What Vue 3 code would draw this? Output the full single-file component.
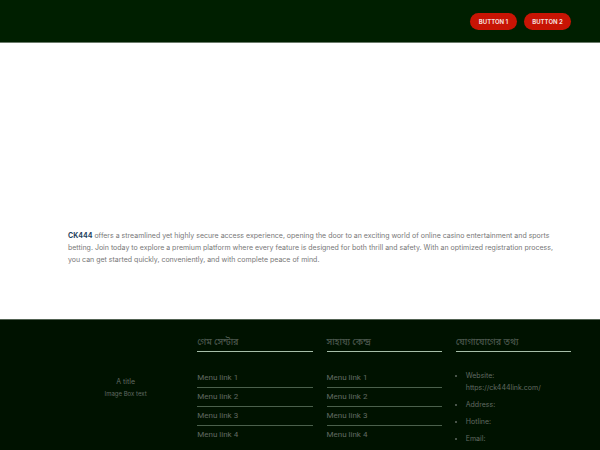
<template>
  <div class="page">
    <header class="header">
      <button v-for="label in buttons" :key="label" class="button" type="button">{{ label }}</button>
    </header>

    <main class="content">
      <p>
        <a class="brand" href="#">CK444</a> offers a streamlined yet highly secure access experience, opening the door to an exciting world of online casino entertainment and sports betting. Join today to explore a premium platform where every feature is designed for both thrill and safety. With an optimized registration process, you can get started quickly, conveniently, and with complete peace of mind.
      </p>
    </main>

    <footer class="footer">
      <div class="image-box">
        <p>A title</p>
        <p class="image-text">Image Box text</p>
      </div>

      <nav v-for="menu in menus" :key="menu.title" class="column">
        <h2>{{ menu.title }}</h2>
        <ul class="menu">
          <li v-for="n in 4" :key="n"><a href="#">Menu link {{ n }}</a></li>
        </ul>
      </nav>

      <section class="column">
        <h2>যোগাযোগের তথ্য</h2>
        <ul class="contact">
          <li>Website: <a href="#">https://ck444link.com/</a></li>
          <li v-for="item in contacts" :key="item">{{ item }}</li>
        </ul>
      </section>
    </footer>
  </div>
</template>

<script setup>
  const buttons = ['Button 1', 'Button 2']

  const menus = [
    { title: 'গেম সেন্টার' },
    { title: 'সাহায্য কেন্দ্র' },
  ]

  const contacts = ['Address:', 'Hotline:', 'Email:']
</script>

<style>
  body {
    margin: 0;
    background: #fff;
  }
</style>

<style scoped>
  .page {
    display: flex;
    flex-direction: column;
    height: 100vh;
    overflow: hidden;
    color: #777;
    font-family: Inter, Roboto, "Noto Sans Bengali", sans-serif;
    font-size: 7px;
    line-height: 12px;
  }

  p, h2, ul {
    margin: 0;
    padding: 0;
  }

  a {
    color: inherit;
    text-decoration: none;
  }

  .header {
    display: flex;
    flex: none;
    align-items: center;
    justify-content: flex-end;
    gap: 7px;
    height: 42px;
    padding-right: 29px;
    background: #001f00;
    border-bottom: 1px solid #6b7b6b;
  }

  .button {
    min-width: 47px;
    height: 17px;
    padding: 0 8px;
    border: 0;
    border-radius: 9px;
    background: #c81404;
    color: #f4dcd8;
    font-family: Inter, sans-serif;
    font-size: 6px;
    font-weight: 700;
    line-height: 17px;
    text-transform: uppercase;
  }

  .content {
    flex: none;
    padding: 187px 36px 53px 68px;
  }

  .brand {
    color: #1f4260;
    font-weight: 700;
  }

  .footer {
    display: grid;
    flex: 1;
    grid-template-columns: repeat(4, 1fr);
    gap: 14px;
    padding: 15px 29px 0 68px;
    border-top: 1px solid #536353;
    background: #001200;
    color: #606a62;
  }

  .image-box {
    padding-top: 41px;
    text-align: center;
  }

  .image-text {
    font-size: 6px;
  }

  h2 {
    height: 16px;
    border-bottom: 1px solid #a6bea8;
    color: #4b574d;
    font-size: 9px;
    font-weight: 500;
    line-height: 13px;
    white-space: nowrap;
  }

  .menu {
    padding-top: 17px;
    font-family: Roboto, sans-serif;
    font-size: 8px;
    list-style: none;
  }

  .menu li {
    height: 18px;
    line-height: 18px;
  }

  .menu li + li {
    border-top: 1px solid #4b604c;
  }

  .contact {
    padding: 18px 0 0 10px;
  }

  .contact li {
    margin-bottom: 5px;
  }

  .contact a {
    display: block;
  }
</style>
